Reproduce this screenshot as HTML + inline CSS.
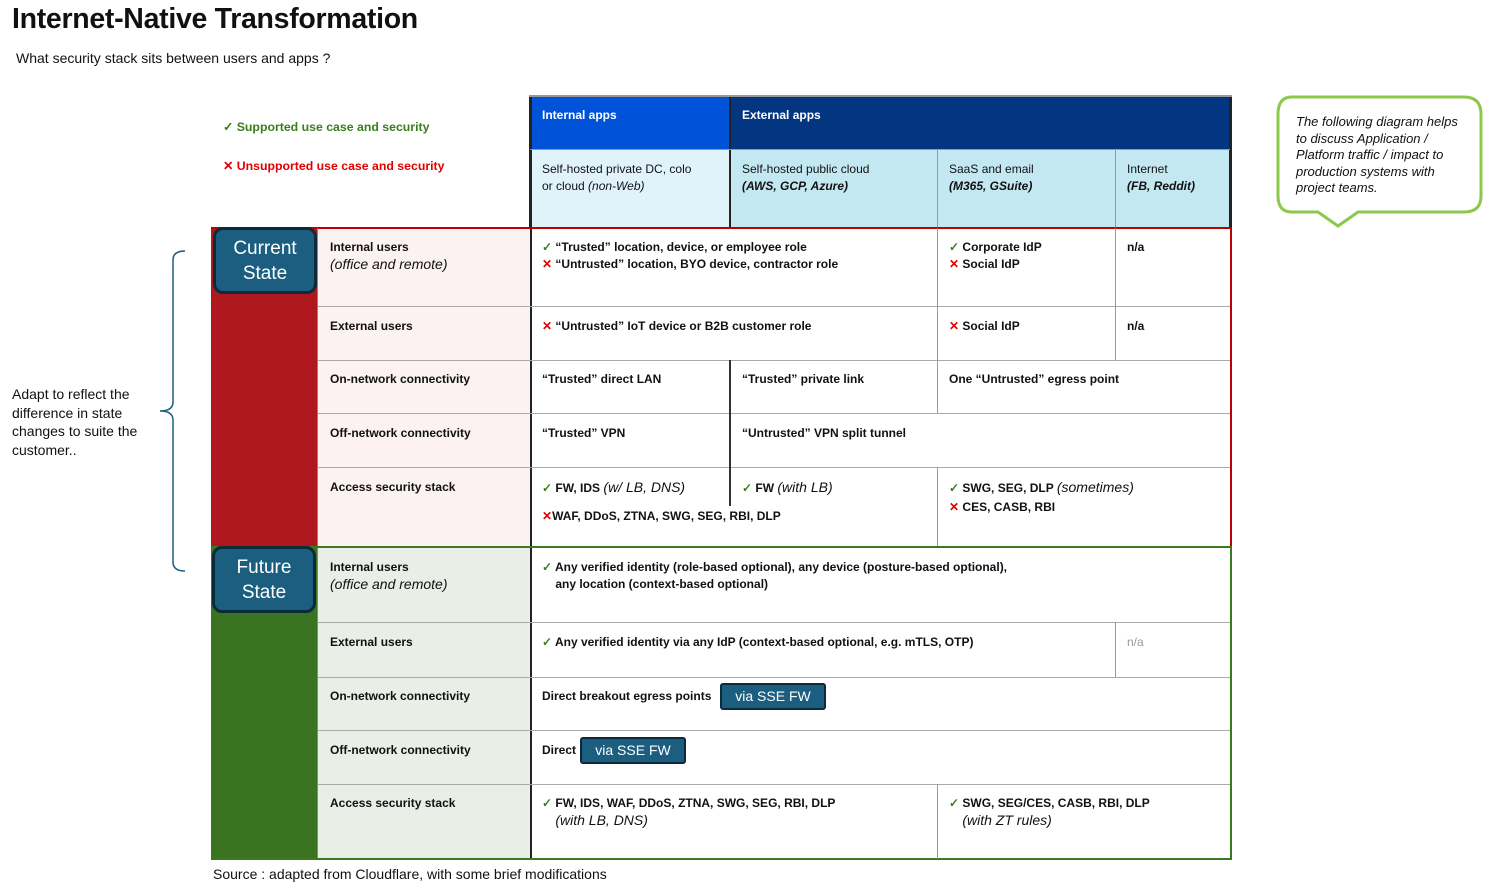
<!DOCTYPE html>
<html><head><meta charset="utf-8"><style>
body{margin:0;width:1489px;height:883px;background:#fff;position:relative;font-family:"Liberation Sans",sans-serif;overflow:hidden}
.a{position:absolute;box-sizing:border-box}
.t{position:absolute;font-size:12px;color:#111;line-height:17px;white-space:nowrap}
.b{font-weight:bold}
.i{font-style:italic}
.hl{position:absolute;height:1px;background:#aaa}
.vl{position:absolute;width:1px;background:#999}
.ok{color:#3a7d1e}
.no{color:#e00000;font-weight:bold}
.badge{position:absolute;background:#1b5e80;border:3px solid #0d2a3a;border-radius:10px;color:#fff;font-size:19px;text-align:center;line-height:25px;box-sizing:border-box}
.sse{position:absolute;background:#1b5e80;border:2px solid #0d2a3a;border-radius:3px;color:#fff;font-size:14px;text-align:center;line-height:22px;height:27px;box-sizing:border-box}
</style></head><body>
<div class="t b" style="left:12px;top:3px;font-size:28.5px;line-height:32px;letter-spacing:-0.3px">Internet-Native Transformation</div>
<div class="t" style="left:16px;top:50px;font-size:14px">What security stack sits between users and apps ?</div>

<div class="t b ok" style="left:223px;top:119px;font-size:12.3px">✓ Supported use case and security</div>
<div class="t b" style="left:223px;top:158px;color:#e00000;font-size:12.3px">✕ Unsupported use case and security</div>

<!-- header -->
<div class="a" style="left:530px;top:96px;width:200px;height:54px;background:#0052d9"></div>
<div class="a" style="left:730px;top:96px;width:501px;height:54px;background:#033580"></div>
<div class="a" style="left:530px;top:150px;width:200px;height:78px;background:#e0f3fa"></div>
<div class="a" style="left:730px;top:150px;width:501px;height:78px;background:#c3e8f2"></div>
<div class="vl" style="left:937px;top:150px;height:78px"></div>
<div class="vl" style="left:1115px;top:150px;height:78px"></div>
<div class="a" style="left:529px;top:96px;width:3px;height:764px;background:#222"></div>
<div class="a" style="left:729px;top:96px;width:2px;height:132px;background:#222"></div>
<div class="a" style="left:1229px;top:96px;width:3px;height:132px;background:#222"></div>
<div class="a" style="left:529px;top:95px;width:703px;height:2px;background:#999"></div>
<div class="hl" style="left:530px;top:149px;width:700px;background:#999"></div>
<div class="t b" style="left:542px;top:107px;color:#fff">Internal apps</div>
<div class="t b" style="left:742px;top:107px;color:#fff">External apps</div>
<div class="t" style="left:542px;top:161px">Self-hosted private DC, colo<br>or cloud <i>(non-Web)</i></div>
<div class="t" style="left:742px;top:161px">Self-hosted public cloud<br><b><i>(AWS, GCP, Azure)</i></b></div>
<div class="t" style="left:949px;top:161px">SaaS and email<br><b><i>(M365, GSuite)</i></b></div>
<div class="t" style="left:1127px;top:161px">Internet<br><b><i>(FB, Reddit)</i></b></div>

<!-- current -->
<div class="a" style="left:211px;top:228px;width:106px;height:319px;background:#b01820"></div>
<div class="a" style="left:317px;top:228px;width:213px;height:319px;background:#fbf2f1"></div>
<div class="a" style="left:211px;top:227px;width:1021px;height:2px;background:#c00000"></div>
<div class="a" style="left:1230px;top:227px;width:2px;height:320px;background:#c00000"></div>
<div class="hl" style="left:317px;top:306px;width:913px"></div>
<div class="hl" style="left:317px;top:360px;width:913px"></div>
<div class="hl" style="left:317px;top:413px;width:913px"></div>
<div class="hl" style="left:317px;top:467px;width:913px"></div>
<div class="vl" style="left:317px;top:228px;height:631px;background:#888"></div>
<div class="vl" style="left:937px;top:228px;height:132px"></div>
<div class="vl" style="left:1115px;top:228px;height:132px"></div>
<div class="a" style="left:729px;top:360px;width:2px;height:146px;background:#333"></div>
<div class="vl" style="left:937px;top:360px;height:53px"></div>
<div class="vl" style="left:937px;top:467px;height:80px"></div>
<div class="badge" style="left:213px;top:227px;width:104px;height:67px;padding-top:6px">Current<br>State</div>

<div class="t b" style="left:330px;top:239px">Internal users<br><span class="i" style="font-weight:normal;font-size:14px">(office and remote)</span></div>
<div class="t b" style="left:330px;top:318px">External users</div>
<div class="t b" style="left:330px;top:371px">On-network connectivity</div>
<div class="t b" style="left:330px;top:425px">Off-network connectivity</div>
<div class="t b" style="left:330px;top:479px">Access security stack</div>

<div class="t b" style="left:542px;top:239px"><span class="ok">✓</span> “Trusted” location, device, or employee role<br><span class="no">✕</span> “Untrusted” location, BYO device, contractor role</div>
<div class="t b" style="left:949px;top:239px"><span class="ok">✓</span> Corporate IdP<br><span class="no">✕</span> Social IdP</div>
<div class="t b" style="left:1127px;top:239px">n/a</div>
<div class="t b" style="left:542px;top:318px"><span class="no">✕</span> “Untrusted” IoT device or B2B customer role</div>
<div class="t b" style="left:949px;top:318px"><span class="no">✕</span> Social IdP</div>
<div class="t b" style="left:1127px;top:318px">n/a</div>
<div class="t b" style="left:542px;top:371px">“Trusted” direct LAN</div>
<div class="t b" style="left:742px;top:371px">“Trusted” private link</div>
<div class="t b" style="left:949px;top:371px">One “Untrusted” egress point</div>
<div class="t b" style="left:542px;top:425px">“Trusted” VPN</div>
<div class="t b" style="left:742px;top:425px">“Untrusted” VPN split tunnel</div>
<div class="t b" style="left:542px;top:479px"><span class="ok">✓</span> FW, IDS <i style="font-weight:normal;font-size:14px">(w/ LB, DNS)</i></div>
<div class="t b" style="left:542px;top:508px"><span class="no">✕</span>WAF, DDoS, ZTNA, SWG, SEG, RBI, DLP</div>
<div class="t b" style="left:742px;top:479px"><span class="ok">✓</span> FW <i style="font-weight:normal;font-size:14px">(with LB)</i></div>
<div class="t b" style="left:949px;top:479px"><span class="ok">✓</span> SWG, SEG, DLP <i style="font-weight:normal;font-size:14px">(sometimes)</i></div>
<div class="t b" style="left:949px;top:499px"><span class="no">✕</span> CES, CASB, RBI</div>

<!-- future -->
<div class="a" style="left:211px;top:547px;width:106px;height:313px;background:#3b7420"></div>
<div class="a" style="left:318px;top:548px;width:212px;height:311px;background:#e9eee7"></div>
<div class="a" style="left:211px;top:546px;width:1021px;height:2px;background:#3b7a1f"></div>
<div class="a" style="left:1230px;top:546px;width:2px;height:314px;background:#3b7a1f"></div>
<div class="a" style="left:211px;top:858px;width:1021px;height:2px;background:#3b7a1f"></div>
<div class="hl" style="left:318px;top:622px;width:912px"></div>
<div class="hl" style="left:318px;top:677px;width:912px"></div>
<div class="hl" style="left:318px;top:730px;width:912px"></div>
<div class="hl" style="left:318px;top:784px;width:912px"></div>
<div class="vl" style="left:1115px;top:622px;height:55px"></div>
<div class="vl" style="left:937px;top:784px;height:75px"></div>
<div class="badge" style="left:212px;top:546px;width:104px;height:67px;padding-top:6px">Future<br>State</div>

<div class="t b" style="left:330px;top:559px">Internal users<br><span class="i" style="font-weight:normal;font-size:14px">(office and remote)</span></div>
<div class="t b" style="left:330px;top:634px">External users</div>
<div class="t b" style="left:330px;top:688px">On-network connectivity</div>
<div class="t b" style="left:330px;top:742px">Off-network connectivity</div>
<div class="t b" style="left:330px;top:795px">Access security stack</div>

<div class="t b" style="left:542px;top:559px"><span class="ok">✓</span> Any verified identity (role-based optional), any device (posture-based optional),<br>&nbsp;&nbsp;&nbsp;&nbsp;any location (context-based optional)</div>
<div class="t b" style="left:542px;top:634px"><span class="ok">✓</span> Any verified identity via any IdP (context-based optional, e.g. mTLS, OTP)</div>
<div class="t" style="left:1127px;top:634px;color:#999">n/a</div>
<div class="t b" style="left:542px;top:688px">Direct breakout egress points</div>
<div class="sse" style="left:720px;top:683px;width:106px">via SSE FW</div>
<div class="t b" style="left:542px;top:742px">Direct</div>
<div class="sse" style="left:580px;top:737px;width:106px">via SSE FW</div>
<div class="t b" style="left:542px;top:795px"><span class="ok">✓</span> FW, IDS, WAF, DDoS, ZTNA, SWG, SEG, RBI, DLP<br>&nbsp;&nbsp;&nbsp;&nbsp;<i style="font-weight:normal;font-size:14px">(with LB, DNS)</i></div>
<div class="t b" style="left:949px;top:795px"><span class="ok">✓</span> SWG, SEG/CES, CASB, RBI, DLP<br>&nbsp;&nbsp;&nbsp;&nbsp;<i style="font-weight:normal;font-size:14px">(with ZT rules)</i></div>

<div class="t" style="left:213px;top:866px;font-size:14px">Source : adapted from Cloudflare, with some brief modifications</div>

<!-- brace -->
<svg class="a" style="left:155px;top:248px" width="35" height="328"><path d="M30 3 Q18 3 18 12 L18 154 Q18 163 5 163 Q18 163 18 172 L18 314 Q18 323 30 323" fill="none" stroke="#1b5e80" stroke-width="1.5"/></svg>
<div class="t" style="left:12px;top:385px;font-size:14px;line-height:18.5px">Adapt to reflect the<br>difference in state<br>changes to suite the<br>customer..</div>

<!-- callout -->
<svg class="a" style="left:1276px;top:95px" width="208" height="135"><path d="M16 2 H188 Q205 2 205 19 V101 Q205 117 188 117 H82 L62 131 L42 117 H16 Q2 117 2 101 V19 Q2 2 16 2 Z" fill="#fff" stroke="#8cc84b" stroke-width="3"/></svg>
<div class="t i" style="left:1296px;top:114px;font-size:13px;line-height:16.5px">The following diagram helps<br>to discuss Application /<br>Platform traffic / impact to<br>production systems with<br>project teams.</div>
</body></html>
